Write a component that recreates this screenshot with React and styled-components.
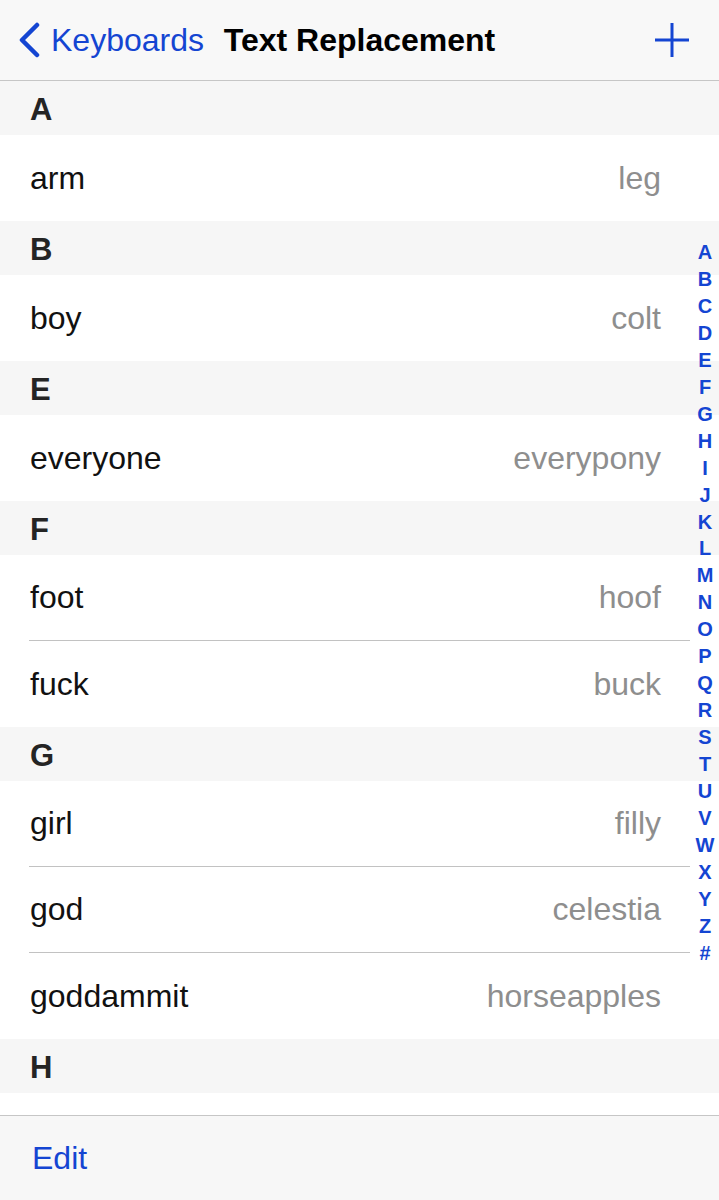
import styled, { createGlobalStyle } from "styled-components";

const GlobalStyle = createGlobalStyle`
  html, body {
    margin: 0;
    padding: 0;
    background: #fff;
    font-family: "Liberation Sans", Arial, sans-serif;
  }
`;

const BLUE = "#1445d2";

const Page = styled.div`
  width: 719px;
  height: 1200px;
  display: flex;
  flex-direction: column;
  overflow: hidden;
`;

const NavBar = styled.div`
  height: 80px;
  flex-shrink: 0;
  background: #f8f8f8;
  border-bottom: 1px solid #c6c6c6;
  display: grid;
  grid-template-columns: 1fr auto 1fr;
  align-items: center;
`;

const BackButton = styled.div`
  display: flex;
  align-items: center;
  gap: 9px;
  padding-left: 16px;
  color: ${BLUE};
  font-size: 32px;
`;

const Title = styled.div`
  font-size: 32px;
  font-weight: bold;
  color: #000;
`;

const AddButton = styled.div`
  justify-self: end;
  padding-right: 29px;
  display: flex;
  align-items: center;
`;

const ListArea = styled.div`
  flex: 1;
  position: relative;
  overflow: hidden;
  background: #fff;
`;

const SectionHeader = styled.div`
  height: 54px;
  box-sizing: border-box;
  padding-top: 3px;
  background: #f6f6f6;
  display: flex;
  align-items: center;
  padding-left: 30px;
  font-size: 31px;
  font-weight: bold;
  color: #242424;
`;

const Row = styled.div`
  height: 86px;
  box-sizing: border-box;
  margin-left: 29px;
  margin-right: 29px;
  padding-right: 29px;
  display: flex;
  align-items: center;
  justify-content: space-between;
  border-bottom: ${(p) => (p.$last ? "none" : "1px solid #c2c2c2")};
  font-size: 32px;
`;

const Phrase = styled.span`
  color: #111;
  padding-left: 1px;
`;

const Shortcut = styled.span`
  color: #8e8e8e;
`;

const IndexBar = styled.div`
  position: absolute;
  right: 3px;
  top: 158px;
  width: 22px;
  display: flex;
  flex-direction: column;
  align-items: center;
`;

const IndexLetter = styled.span`
  height: 26.96px;
  line-height: 26.96px;
  font-size: 20px;
  font-weight: bold;
  color: ${BLUE};
`;

const Toolbar = styled.div`
  height: 84px;
  flex-shrink: 0;
  background: #f7f7f7;
  border-top: 1px solid #c6c6c6;
  display: flex;
  align-items: center;
  padding-left: 32px;
`;

const ToolbarButton = styled.span`
  color: ${BLUE};
  font-size: 32px;
`;

const sections = [
  { letter: "A", items: [["arm", "leg"]] },
  { letter: "B", items: [["boy", "colt"]] },
  { letter: "E", items: [["everyone", "everypony"]] },
  { letter: "F", items: [["foot", "hoof"], ["fuck", "buck"]] },
  {
    letter: "G",
    items: [
      ["girl", "filly"],
      ["god", "celestia"],
      ["goddammit", "horseapples"],
    ],
  },
  { letter: "H", items: [] },
];

const index = "ABCDEFGHIJKLMNOPQRSTUVWXYZ#".split("");

export default function App() {
  return (
    <Page>
      <GlobalStyle />
      <NavBar>
        <BackButton>
          <svg width="26" height="36" viewBox="0 0 26 36">
            <path
              d="M21 3 L6 18 L21 33"
              fill="none"
              stroke={BLUE}
              strokeWidth="4.5"
              strokeLinecap="round"
              strokeLinejoin="round"
            />
          </svg>
          Keyboards
        </BackButton>
        <Title>Text Replacement</Title>
        <AddButton>
          <svg width="36" height="36" viewBox="0 0 36 36">
            <path d="M18 1 V35 M1 18 H35" stroke={BLUE} strokeWidth="3" />
          </svg>
        </AddButton>
      </NavBar>
      <ListArea>
        {sections.map((s) => (
          <div key={s.letter}>
            <SectionHeader>{s.letter}</SectionHeader>
            {s.items.map(([phrase, shortcut], i) => (
              <Row key={phrase} $last={i === s.items.length - 1}>
                <Phrase>{phrase}</Phrase>
                <Shortcut>{shortcut}</Shortcut>
              </Row>
            ))}
          </div>
        ))}
        <IndexBar>
          {index.map((l) => (
            <IndexLetter key={l}>{l}</IndexLetter>
          ))}
        </IndexBar>
      </ListArea>
      <Toolbar>
        <ToolbarButton>Edit</ToolbarButton>
      </Toolbar>
    </Page>
  );
}
